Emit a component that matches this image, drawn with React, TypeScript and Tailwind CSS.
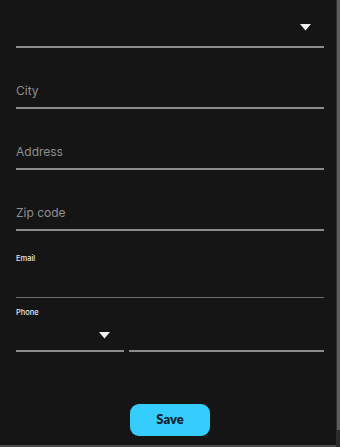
import React from 'react'

const Caret = ({ className }: { className?: string }) => (
  <svg width="11" height="7" viewBox="0 0 11 7" className={className}>
    <path d="M0 0 H11 L5.5 6.5 Z" fill="#f2f2f2" />
  </svg>
)

const TextField = ({ placeholder }: { placeholder: string }) => (
  <div className="mt-[27px] h-[34px] flex items-center border-b-2 border-[#8c8c8c]">
    <input
      placeholder={placeholder}
      className="w-full bg-transparent outline-none text-[12px] text-[#e5e5e5] placeholder-[#8f8f8f] pb-[1px]"
    />
  </div>
)

export default function App() {
  return (
    <div className="w-[340px] h-[447px] flex bg-[#151515] overflow-hidden" style={{ fontFamily: 'Inter, "Open Sans", sans-serif' }}>
      <div className="flex-1 flex flex-col border-b-2 border-[#4a4a4a]">
        <div className="pl-4 pr-3">
          {/* country select */}
          <div className="h-[48px] flex items-center justify-end border-b-2 border-[#8c8c8c] pr-[13px]">
            <Caret className="mt-[8px]" />
          </div>

          <TextField placeholder="City" />
          <TextField placeholder="Address" />
          <TextField placeholder="Zip code" />

          {/* email */}
          <div className="mt-[23px]">
            <label className="block text-[7.5px] leading-[10px] text-[#e8e8e8] font-medium">Email</label>
            <input className="w-full h-[34px] bg-transparent outline-none border-b border-[#6e6e6e] text-[12px] text-white" />
          </div>

          {/* phone */}
          <div className="mt-[10px]">
            <label className="block text-[7.5px] leading-[10px] text-[#e8e8e8] font-medium">Phone</label>
            <div className="flex gap-[5px] mt-[1px]">
              <div className="w-[108px] h-[33px] flex items-center justify-end border-b-2 border-[#8c8c8c] pr-[14px]">
                <Caret className="mt-[1px]" />
              </div>
              <input className="flex-1 h-[33px] bg-transparent outline-none border-b-2 border-[#8c8c8c] text-[12px] text-white" />
            </div>
          </div>
        </div>

        <div className="flex justify-center pl-[4px] mt-[52px]">
          <button
            type="button"
            className="w-[80px] h-[32px] rounded-[9px] bg-[#35cdfb] text-[#0f2230] text-[13px] font-extrabold"
            style={{ fontFamily: 'Lato, Inter, sans-serif' }}
          >
            Save
          </button>
        </div>
      </div>

      {/* scrollbar */}
      <div className="w-[4px] h-full flex flex-col border-l border-[#2e2e2e]">
        <div className="h-[430px] bg-[#5c5c5c]" />
        <div className="flex-1 bg-[#2a2a2a]" />
      </div>
    </div>
  )
}
